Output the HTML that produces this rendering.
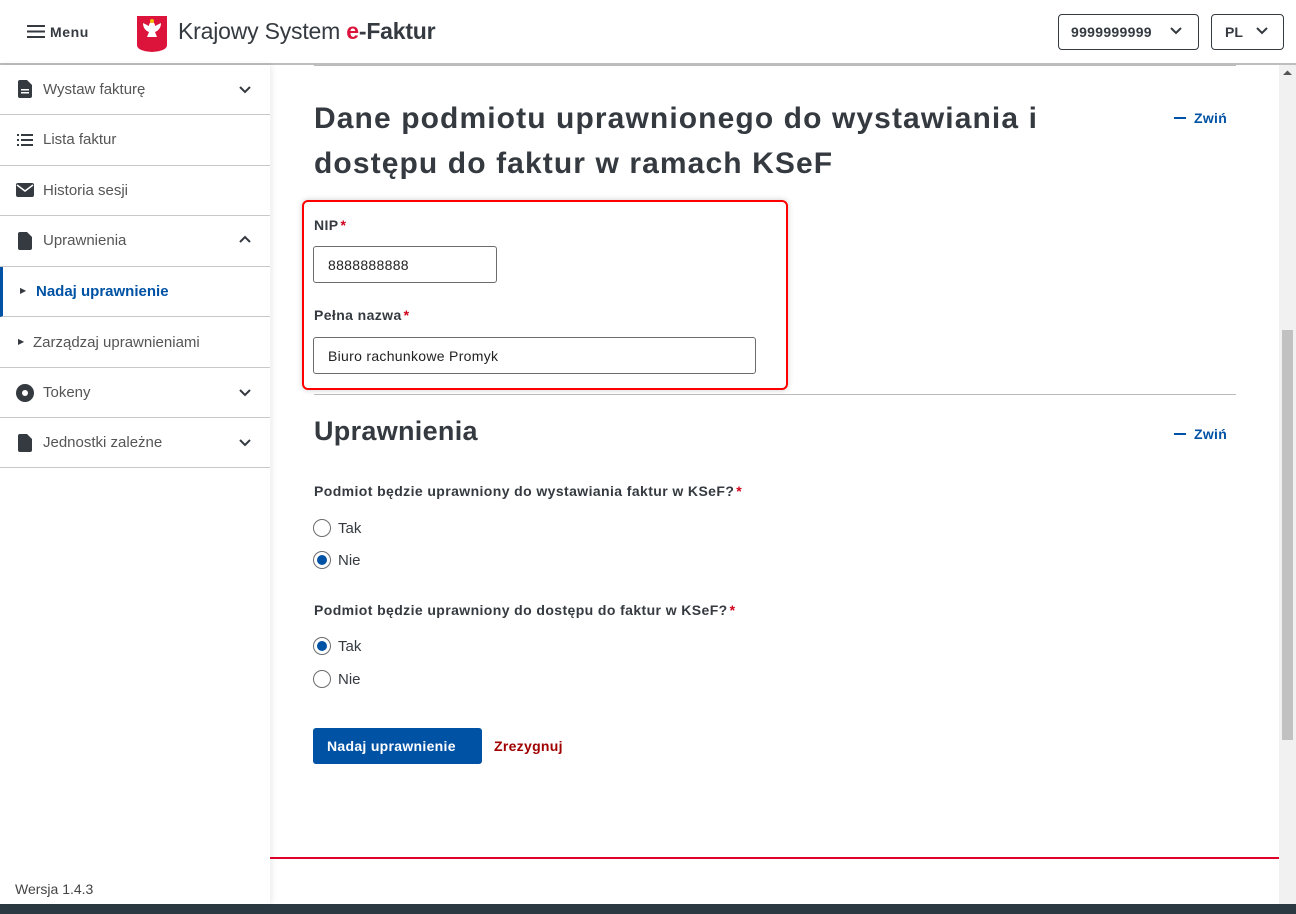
<!DOCTYPE html>
<html><head><meta charset="utf-8"><style>
*{margin:0;padding:0;box-sizing:border-box}
body{width:1296px;height:914px;overflow:hidden;background:#fff;font-family:"Liberation Sans",sans-serif;color:#343a40;position:relative}
.abs{position:absolute}
.hdr{left:0;top:0;width:1296px;height:65px;border-bottom:2px solid #bdbdbd;background:#fff}
.side{left:0;top:65px;width:270px;height:839px;background:#fff;box-shadow:2px 0 6px rgba(0,0,0,.08);z-index:2}
.item{position:absolute;left:0;width:270px;height:51px;border-bottom:1px solid #c8c8c8;font-size:15px;color:#555}
.item .t{position:absolute;left:43px;top:16px}
.chev{position:absolute;left:238px;top:17px;width:14px;height:14px}
.sb{left:1279px;top:65px;width:17px;height:839px;background:#f1f1f1}
.lbl{font-weight:bold;font-size:14px;color:#343a40;letter-spacing:.4px}
.star{color:#d0021b;margin-left:2px}
.inp{position:absolute;border:1px solid #6c6c6c;border-radius:3px;height:37px;font-size:14px;padding:10px 14px;color:#222;letter-spacing:.3px}
.radio{position:absolute;width:18px;height:18px;border:1.5px solid #6c6c6c;border-radius:50%;left:313px}
.radio.on::after{content:"";position:absolute;left:2.5px;top:2.5px;width:10px;height:10px;border-radius:50%;background:#0052a5}
.rl{position:absolute;left:338px;font-size:15px;color:#343a40}
.zw{position:absolute;left:1174px;font-weight:bold;font-size:14px;color:#0052a5;letter-spacing:.3px}
.zw::before{content:"";display:inline-block;width:12px;height:2px;background:#0052a5;vertical-align:middle;margin-right:8px;margin-top:-2px}
</style></head><body>
<div class="abs hdr">
 <svg class="abs" style="left:27px;top:25px" width="18" height="13"><rect y="0" width="18" height="2" fill="#343a40"/><rect y="5.5" width="18" height="2" fill="#343a40"/><rect y="11" width="18" height="2" fill="#343a40"/></svg>
 <div class="abs" style="left:50px;top:24px;font-weight:bold;font-size:14px;letter-spacing:.6px">Menu</div>
 <svg class="abs" style="left:137px;top:16px" width="30" height="36"><path d="M0 0h30v29q0 6-15 7Q0 35 0 29z" fill="#dc143c"/><path d="M15 6c-2 0-3 2-3 4l-6-3c0 5 3 8 6 9l-2 5h10l-2-5c3-1 6-4 6-9l-6 3c0-2-1-4-3-4z" fill="#fff"/><circle cx="15" cy="5" r="2" fill="#f2c200"/></svg>
 <div class="abs" style="left:178px;top:18px;font-size:23px;color:#343a40;letter-spacing:-.2px">Krajowy System <b><span style="color:#dc143c">e</span>-Faktur</b></div>
 <div class="abs" style="left:1058px;top:14px;width:141px;height:36px;border:1px solid #343a40;border-radius:4px;font-weight:bold;font-size:14px;padding:9px 12px;letter-spacing:.3px">9999999999</div>
 <svg class="abs" style="left:1170px;top:27px" width="12" height="8"><path d="M1 1l5 5 5-5" stroke="#343a40" stroke-width="2" fill="none"/></svg>
 <div class="abs" style="left:1211px;top:14px;width:73px;height:36px;border:1px solid #343a40;border-radius:4px;font-weight:bold;font-size:14px;padding:9px 13px">PL</div>
 <svg class="abs" style="left:1256px;top:27px" width="12" height="8"><path d="M1 1l5 5 5-5" stroke="#343a40" stroke-width="2" fill="none"/></svg>
</div>
<div class="abs side">
 <div class="item" style="top:0;height:50px"><svg class="abs" style="left:18px;top:15px" width="14" height="18"><path d="M0 2a2 2 0 012-2h7l5 5v11a2 2 0 01-2 2H2a2 2 0 01-2-2z" fill="#343a40"/><rect x="3" y="9" width="8" height="1.5" fill="#fff"/><rect x="3" y="12" width="8" height="1.5" fill="#fff"/></svg><span class="t">Wystaw fakturę</span><svg class="chev"><path d="M2 5l5 5 5-5" stroke="#343a40" stroke-width="2" fill="none"/></svg></div>
 <div class="item" style="top:50px;height:51px"><svg class="abs" style="left:17px;top:19px" width="16" height="12"><g fill="#343a40"><rect width="2" height="2"/><rect y="5" width="2" height="2"/><rect y="10" width="2" height="2"/><rect x="4" width="12" height="2"/><rect x="4" y="5" width="12" height="2"/><rect x="4" y="10" width="12" height="2"/></g></svg><span class="t">Lista faktur</span></div>
 <div class="item" style="top:101px;height:50px"><svg class="abs" style="left:16px;top:17px" width="18" height="14"><rect width="18" height="14" rx="2" fill="#343a40"/><path d="M1 2l8 6 8-6" stroke="#fff" stroke-width="1.5" fill="none"/></svg><span class="t">Historia sesji</span></div>
 <div class="item" style="top:151px;height:51px"><svg class="abs" style="left:18px;top:16px" width="14" height="18"><path d="M0 2a2 2 0 012-2h7l5 5v11a2 2 0 01-2 2H2a2 2 0 01-2-2z" fill="#343a40"/></svg><span class="t">Uprawnienia</span><svg class="chev"><path d="M2 9l5-5 5 5" stroke="#343a40" stroke-width="2" fill="none"/></svg></div>
 <div class="item" style="top:202px;height:50px;border-left:3px solid #0052a5"><span class="abs" style="left:17px;top:19px;font-size:8px;color:#343a40">▶</span><span class="abs" style="left:33px;top:16px;font-weight:bold;color:#0052a5">Nadaj uprawnienie</span></div>
 <div class="item" style="top:252px;height:51px"><span class="abs" style="left:18px;top:20px;font-size:8px;color:#343a40">▶</span><span class="abs" style="left:33px;top:17px">Zarządzaj uprawnieniami</span></div>
 <div class="item" style="top:303px;height:50px"><svg class="abs" style="left:16px;top:16px" width="18" height="18"><circle cx="9" cy="9" r="9" fill="#343a40"/><circle cx="9" cy="9" r="3" fill="#fff"/></svg><span class="t">Tokeny</span><svg class="chev"><path d="M2 5l5 5 5-5" stroke="#343a40" stroke-width="2" fill="none"/></svg></div>
 <div class="item" style="top:353px;height:50px"><svg class="abs" style="left:18px;top:16px" width="14" height="18"><path d="M0 2a2 2 0 012-2h7l5 5v11a2 2 0 01-2 2H2a2 2 0 01-2-2z" fill="#343a40"/></svg><span class="t">Jednostki zależne</span><svg class="chev"><path d="M2 5l5 5 5-5" stroke="#343a40" stroke-width="2" fill="none"/></svg></div>
 <div class="abs" style="left:15px;top:816px;font-size:14px;color:#444">Wersja 1.4.3</div>
</div>
<div class="abs" style="left:314px;top:65px;width:922px;height:1px;background:#bbb"></div>
<div class="abs" style="left:314px;top:96px;width:860px;font-size:30px;font-weight:bold;line-height:45px;color:#343a40;letter-spacing:1.1px;white-space:nowrap">Dane podmiotu uprawnionego do wystawiania i<br>dostępu do faktur w ramach KSeF</div>
<div class="zw" style="top:110px">Zwiń</div>
<div class="abs" style="left:302px;top:200px;width:486px;height:190px;border:2px solid #f00;border-radius:6px;box-shadow:0 0 6px rgba(0,0,0,.2)"></div>
<div class="abs lbl" style="left:314px;top:217px">NIP<span class="star">*</span></div>
<div class="inp" style="left:313px;top:246px;width:184px">8888888888</div>
<div class="abs lbl" style="left:314px;top:307px">Pełna nazwa<span class="star">*</span></div>
<div class="inp" style="left:313px;top:337px;width:443px">Biuro rachunkowe Promyk</div>
<div class="abs" style="left:314px;top:394px;width:922px;height:1px;background:#bbb"></div>
<div class="abs" style="left:314px;top:416px;font-size:27px;font-weight:bold;color:#343a40;letter-spacing:.3px">Uprawnienia</div>
<div class="zw" style="top:426px">Zwiń</div>
<div class="abs lbl" style="left:314px;top:483px">Podmiot będzie uprawniony do wystawiania faktur w KSeF?<span class="star">*</span></div>
<div class="radio" style="top:519px"></div><div class="rl" style="top:520px">Tak</div>
<div class="radio on" style="top:551px"></div><div class="rl" style="top:552px">Nie</div>
<div class="abs lbl" style="left:314px;top:602px">Podmiot będzie uprawniony do dostępu do faktur w KSeF?<span class="star">*</span></div>
<div class="radio on" style="top:637px"></div><div class="rl" style="top:638px">Tak</div>
<div class="radio" style="top:670px"></div><div class="rl" style="top:671px">Nie</div>
<div class="abs" style="left:313px;top:728px;width:169px;height:36px;background:#0052a5;border-radius:3px;color:#fff;font-weight:bold;font-size:14px;padding:10px 14px;letter-spacing:.3px">Nadaj uprawnienie</div>
<div class="abs" style="left:494px;top:738px;color:#a00000;font-weight:bold;font-size:14px;letter-spacing:.3px">Zrezygnuj</div>
<div class="abs" style="left:270px;top:857px;width:1009px;height:2px;background:#e0002a"></div>
<div class="abs sb"><div class="abs" style="left:3px;top:265px;width:11px;height:410px;background:#c1c1c1"></div><svg class="abs" style="left:4px;top:5px" width="9" height="6"><path d="M0 5l4.5-4.5L9 5z" fill="#555"/></svg></div>
<div class="abs" style="left:0;top:904px;width:1296px;height:10px;background:#2b3a42"></div>
</body></html>
